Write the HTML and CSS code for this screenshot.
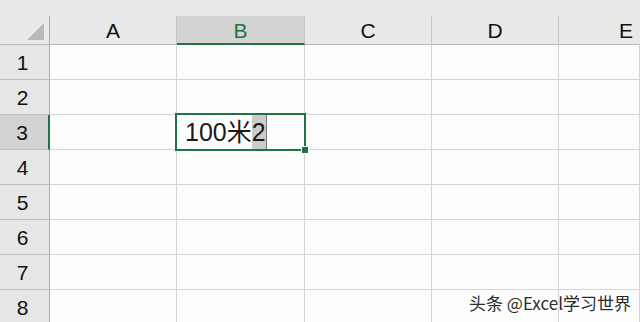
FILE: index.html
```html
<!DOCTYPE html>
<html lang="zh-CN">
<head>
  <meta charset="UTF-8" />
  <title>Excel 单元格</title>
  <link rel="stylesheet" href="styles.css">
</head>
<body>
  <div class="sheet">
    <div class="corner"><span class="select-all"></span></div>
    <div class="col-head">A</div>
    <div class="col-head active">B</div>
    <div class="col-head">C</div>
    <div class="col-head">D</div>
    <div class="col-head cut">E</div>

    <div class="row-head">1</div>
    <div class="cell"></div><div class="cell"></div><div class="cell"></div><div class="cell"></div><div class="cell"></div>

    <div class="row-head">2</div>
    <div class="cell"></div><div class="cell"></div><div class="cell"></div><div class="cell"></div><div class="cell"></div>

    <div class="row-head active">3</div>
    <div class="cell"></div>
    <div class="cell editing">
      <span class="value">100米<span class="picked">2</span></span>
      <div class="selection"><span class="fill-handle"></span></div>
    </div>
    <div class="cell"></div><div class="cell"></div><div class="cell"></div>

    <div class="row-head">4</div>
    <div class="cell"></div><div class="cell"></div><div class="cell"></div><div class="cell"></div><div class="cell"></div>

    <div class="row-head">5</div>
    <div class="cell"></div><div class="cell"></div><div class="cell"></div><div class="cell"></div><div class="cell"></div>

    <div class="row-head">6</div>
    <div class="cell"></div><div class="cell"></div><div class="cell"></div><div class="cell"></div><div class="cell"></div>

    <div class="row-head">7</div>
    <div class="cell"></div><div class="cell"></div><div class="cell"></div><div class="cell"></div><div class="cell"></div>

    <div class="row-head">8</div>
    <div class="cell"></div><div class="cell"></div><div class="cell"></div><div class="cell"></div><div class="cell"></div>
  </div>

  <div class="watermark">头条 @Excel学习世界</div>
</body>
</html>
```

FILE: styles.css
```css
body {
  margin: 0;
  background-color: #e9e9e9;
  font-family: 'Liberation Sans', 'Noto Sans CJK SC', sans-serif;
  color: #222;
  overflow: hidden;
  height: 322px;
}

.sheet {
  display: grid;
  grid-template-columns: 50px 127px 128px 127px 127px 1fr;
  grid-template-rows: 45px repeat(8, 35px);
  height: 322px;
  overflow: hidden;
}

/* header row */
.corner,
.col-head {
  margin-top: 16px;
  box-sizing: border-box;
  border-bottom: 1px solid #b9b9b9;
  border-right: 1px solid #c6c6c6;
}

.corner {
  display: flex;
  justify-content: flex-end;
  align-items: flex-end;
  padding: 0 5px 4px 0;
  border-right-color: #aaa;
}

.select-all {
  width: 0;
  height: 0;
  border-left: 17px solid transparent;
  border-bottom: 17px solid #b9b9b9;
}

.col-head {
  display: flex;
  align-items: center;
  justify-content: center;
  font-size: 21px;
  padding-top: 2px;
  color: #111;
}

.col-head.cut {
  justify-content: flex-start;
  padding-left: 60px;
  border-right: none;
}

.col-head.active {
  background-color: #d3d3d3;
  color: #217346;
  border-bottom: 2px solid #217346;
}

/* row headers */
.row-head {
  box-sizing: border-box;
  display: flex;
  align-items: center;
  justify-content: center;
  padding-right: 4px;
  padding-top: 2px;
  font-size: 21px;
  color: #111;
  background-color: #e6e6e6;
  border-bottom: 1px solid #bcbcbc;
  border-right: 1px solid #a9a9a9;
}

.row-head.active {
  background-color: #d3d3d3;
  border-right: 2px solid #217346;
}

/* cells */
.cell {
  box-sizing: border-box;
  background-color: #fdfdfd;
  border-right: 1px solid #d5d5d5;
  border-bottom: 1px solid #d5d5d5;
}

.cell.editing {
  position: relative;
  padding-left: 8px;
  font-size: 25px;
  line-height: 34px;
  color: #1a1a1a;
  white-space: nowrap;
}

.picked {
  display: inline-block;
  background-color: #cbcbcb;
  border-right: 1px solid #777;
  height: 34px;
}

.selection {
  position: absolute;
  left: -2px;
  top: -2px;
  right: -2px;
  bottom: -2px;
  border: 2px solid #217346;
}

.fill-handle {
  position: absolute;
  right: -5px;
  bottom: -5px;
  width: 6px;
  height: 6px;
  background-color: #217346;
  border: 1px solid #fff;
}

.watermark {
  position: absolute;
  right: 9px;
  bottom: 7px;
  font-family: 'Noto Sans CJK SC', sans-serif;
  font-size: 17px;
  color: #2b2b2b;
  text-shadow: 1px 1px 0 #fff, -1px 0 0 #fff;
}
```
